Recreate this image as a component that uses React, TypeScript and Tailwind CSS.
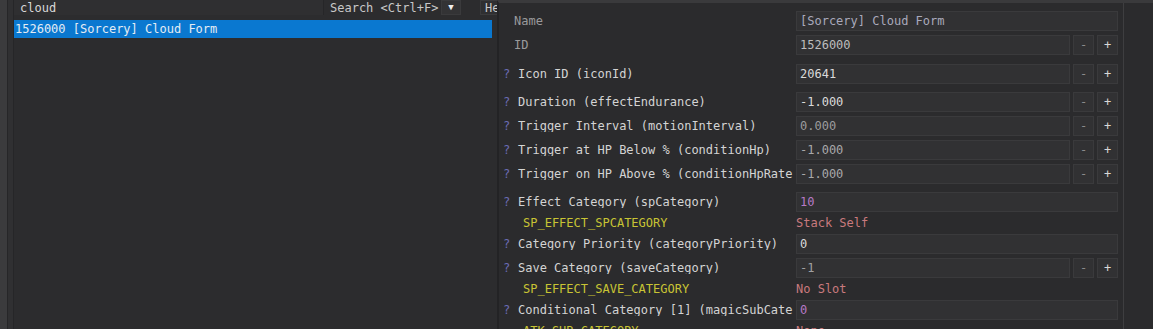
import React from "react";

const mono = { fontFamily: '"DejaVu Sans Mono", "Liberation Mono", monospace' };

type Field = {
  label: string;
  value: string;
  valueColor: string;
  buttons?: boolean;
};

function ValueBox({ value, color, buttons }: { value: string; color: string; buttons?: boolean }) {
  return (
    <div className="flex h-[20px] w-[322px] shrink-0 gap-[3px]">
      <div
        className={`flex h-full min-w-0 flex-1 items-center border border-[#3a3a3c] bg-[#313133] pl-[3px] ${color}`}
      >
        <span className="whitespace-nowrap">{value}</span>
      </div>
      {buttons && (
        <>
          <div className="flex h-full w-[21px] items-center justify-center border border-[#3a3a3c] bg-[#313133] text-[#8a8a8c]">
            -
          </div>
          <div className="flex h-full w-[21px] items-center justify-center border border-[#3a3a3c] bg-[#313133] text-[#d8d8d8]">
            +
          </div>
        </>
      )}
    </div>
  );
}

function FieldRow({ f }: { f: Field }) {
  return (
    <div className="flex h-[24px] items-center">
      <div className="flex w-[293px] shrink-0 items-center overflow-hidden">
        <span className="w-[18px] shrink-0 pl-[3px] text-[#6c6cb4]">?</span>
        <span className="whitespace-nowrap text-[#d4d4d4]">{f.label}</span>
      </div>
      <div className="ml-[3px]">
        <ValueBox value={f.value} color={f.valueColor} buttons={f.buttons} />
      </div>
    </div>
  );
}

function SubRow({ name, value }: { name: string; value: string }) {
  return (
    <div className="flex h-[18px] items-center">
      <div className="w-[296px] shrink-0 pl-[23px] text-[#c8c434]">{name}</div>
      <div className="text-[#c97a7e]">{value}</div>
    </div>
  );
}

function Sep({ first }: { first?: boolean }) {
  return first ? (
    <div className="mb-[2px] mt-[3px] h-px bg-[#454547]" />
  ) : (
    <div className="my-[2px] h-px bg-[#454547]" />
  );
}

export default function App() {
  return (
    <div
      className="flex h-[329px] w-[1153px] overflow-hidden bg-[#2c2c2e] text-[12px] leading-none"
      style={mono}
    >
      {/* left thin strip */}
      <div className="flex shrink-0">
        <div className="w-[7px] bg-[#3b3b3d]" />
        <div className="w-[7px] border-l border-r border-[#262628] bg-[#303032]" />
      </div>

      {/* left list panel */}
      <div className="flex w-[483px] shrink-0 flex-col overflow-hidden">
        <div className="flex h-[15px] items-center">
          <div className="flex h-full w-[310px] shrink-0 items-center border-r border-[#262628] bg-[#2f2f31] pl-[6px] text-[#d8d8d8]">
            cloud
          </div>
          <div className="ml-[6px] w-[111px] shrink-0 whitespace-nowrap text-[#c8c8c8]">Search &lt;Ctrl+F&gt;</div>
          <div className="flex h-full w-[20px] shrink-0 items-center justify-center border border-[#3a3a3c] bg-[#333335] text-[9px] text-[#f0f0f0]">
            ▼
          </div>
          <div className="ml-[19px] flex h-full w-[40px] shrink-0 items-center border border-[#3a3a3c] bg-[#2f2f31] pl-[4px] text-[#c8c8c8]">
            He
          </div>
        </div>
        <div className="mt-[5px] flex h-[18px] w-[478px] items-center bg-[#0a78d0] pl-[1px] text-[#e4ecf4]">
          1526000 [Sorcery] Cloud Form
        </div>
      </div>

      {/* right param panel */}
      <div className="relative flex min-w-0 flex-1 flex-col border-l-2 border-t-[3px] border-l-[#232325] border-t-[#3a3a3c] bg-[#2b2b2d] pl-[1px] pt-[6px]">
        <div className="absolute bottom-0 left-[624px] top-0 w-px bg-[#3e3e40]" />
        <div className="w-[625px]">
          <div className="flex h-[24px] items-center">
            <div className="w-[293px] shrink-0 pl-[14px] text-[#9a9a9c]">Name</div>
            <div className="ml-[3px]">
              <ValueBox value="[Sorcery] Cloud Form" color="text-[#a9a9bb]" />
            </div>
          </div>
          <div className="flex h-[24px] items-center">
            <div className="w-[293px] shrink-0 pl-[14px] text-[#9a9a9c]">ID</div>
            <div className="ml-[3px]">
              <ValueBox value="1526000" color="text-[#bdbdbd]" buttons />
            </div>
          </div>
        </div>
        <Sep first />
        <div className="w-[625px]">
          <FieldRow f={{ label: "Icon ID (iconId)", value: "20641", valueColor: "text-[#dadada]", buttons: true }} />
        </div>
        <Sep />
        <div className="w-[625px]">
          <FieldRow f={{ label: "Duration (effectEndurance)", value: "-1.000", valueColor: "text-[#dadada]", buttons: true }} />
          <FieldRow f={{ label: "Trigger Interval (motionInterval)", value: "0.000", valueColor: "text-[#9c9c9e]", buttons: true }} />
          <FieldRow f={{ label: "Trigger at HP Below % (conditionHp)", value: "-1.000", valueColor: "text-[#a8a8aa]", buttons: true }} />
          <FieldRow f={{ label: "Trigger on HP Above % (conditionHpRate", value: "-1.000", valueColor: "text-[#a8a8aa]", buttons: true }} />
        </div>
        <Sep />
        <div className="w-[625px]">
          <FieldRow f={{ label: "Effect Category (spCategory)", value: "10", valueColor: "text-[#b77ac6]" }} />
          <SubRow name="SP_EFFECT_SPCATEGORY" value="Stack Self" />
          <FieldRow f={{ label: "Category Priority (categoryPriority)", value: "0", valueColor: "text-[#dadada]" }} />
          <FieldRow f={{ label: "Save Category (saveCategory)", value: "-1", valueColor: "text-[#a0a0a2]", buttons: true }} />
          <SubRow name="SP_EFFECT_SAVE_CATEGORY" value="No Slot" />
          <FieldRow f={{ label: "Conditional Category [1] (magicSubCate", value: "0", valueColor: "text-[#b77ac6]" }} />
          <SubRow name="ATK_SUB_CATEGORY" value="None" />
        </div>
      </div>
    </div>
  );
}
